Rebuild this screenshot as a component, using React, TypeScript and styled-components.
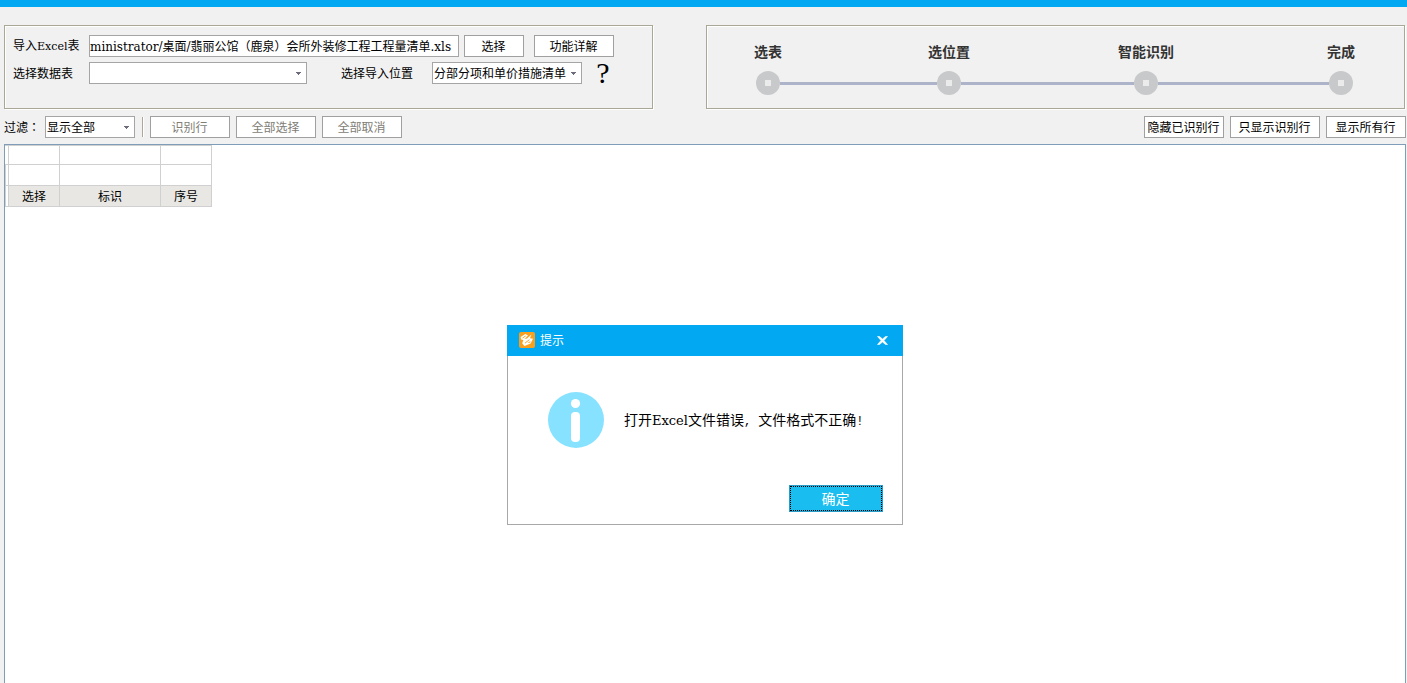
import React, { useEffect, useRef } from 'react';
import styled, { createGlobalStyle } from 'styled-components';

const cjk = '"Noto Sans CJK SC", sans-serif';

const GlobalStyle = createGlobalStyle`
  * { box-sizing: border-box; }
  body {
    margin: 0;
    background: #f1f1f1;
    color: #000;
    font: 12px/16px ${cjk};
  }
  button, input, select { font: inherit; color: inherit; }
`;

const Page = styled.div`
  display: flex;
  flex-direction: column;
  min-height: 100vh;
`;

const TopStrip = styled.div`
  height: 7px;
  background: #02a8f2;
`;

const Panels = styled.div`
  display: flex;
  gap: 53px;
  padding: 18px 2px 0 4px;
`;

const Panel = styled.section`
  height: 84px;
  border: 1px solid #aaa797;
  box-shadow: 1px 1px 0 #fff, inset 1px 1px 0 #fff;
`;

const ImportPanel = styled(Panel)`
  display: flex;
  flex: none;
  flex-direction: column;
  gap: 5px;
  padding: 9px 38px 0 8px;
`;

const StepsPanel = styled(Panel)`
  flex: 1;
  padding: 16px 51px 0 49px;
`;

const FormRow = styled.div`
  display: flex;
  align-items: center;
  height: 22px;
`;

const Label = styled.label<{ $width: number; $indent?: number }>`
  flex: none;
  width: ${(p) => p.$width}px;
  margin-left: ${(p) => p.$indent ?? 0}px;
  white-space: nowrap;
`;

const Latin = styled.span`
  font-family: "DejaVu Serif", serif;
  font-size: 11px;
`;

const PathInput = styled.input`
  width: 370px;
  height: 22px;
  margin-right: 5px;
  padding: 0 3px 2px 0;
  border: 1px solid #a5a5a5;
  background: #fff;
  font-family: "DejaVu Serif", ${cjk};
  outline: none;
`;

const Button = styled.button<{ $width: number }>`
  flex: none;
  width: ${(p) => p.$width}px;
  height: 22px;
  padding: 0 1px 1px 0;
  border: 1px solid #a0a0a0;
  background: #fff;
  line-height: 16px;
  white-space: nowrap;
  &:disabled { color: #807d75; }
`;

const Detail = styled(Button)`
  margin-left: 10px;
`;

const SelectBox = styled.div<{ $width: number }>`
  display: grid;
  flex: none;
  align-items: center;
  width: ${(p) => p.$width}px;
  height: 22px;
  border: 1px solid #a5a5a5;
  background: #fff;
  & > * { grid-area: 1 / 1; }
  & > svg { justify-self: end; margin-right: 5px; pointer-events: none; }
`;

const Select = styled.select`
  width: 100%;
  height: 20px;
  padding: 0 14px 0 1px;
  border: 0;
  background: transparent;
  appearance: none;
  outline: none;
`;

const Help = styled.button`
  width: 16px;
  height: 22px;
  margin-left: 13px;
  padding: 0;
  border: 0;
  background: none;
  font: 30px/22px "Liberation Serif", serif;
`;

const Steps = styled.ol`
  display: flex;
  align-items: flex-end;
  margin: 0;
  padding: 0;
  list-style: none;
`;

const Step = styled.li`
  display: flex;
  flex: none;
  flex-direction: column;
  align-items: center;
  gap: 11px;
  width: 24px;
  color: #333;
  font-size: 14px;
  font-weight: bold;
  line-height: 18px;
  white-space: nowrap;
`;

const Dot = styled.span`
  display: grid;
  place-items: center;
  width: 24px;
  height: 24px;
  border-radius: 50%;
  background: #c8c9cb;
  &::after {
    content: "";
    width: 6px;
    height: 6px;
    background: #ebebeb;
  }
`;

const Line = styled.li<{ $grow: number }>`
  flex: ${(p) => p.$grow} 1 0;
  height: 3px;
  margin-bottom: 10px;
  background: #adb4ca;
`;

const Toolbar = styled.div`
  display: flex;
  align-items: center;
  gap: 6px;
  padding: 7px 1px 6px 4px;
`;

const FilterLabel = styled.label`
  width: 35px;
  white-space: nowrap;
`;

const Colon = styled.span`
  font-family: "Noto Sans CJK TC", sans-serif;
`;

const Divider = styled.span`
  width: 2px;
  height: 20px;
  margin-left: 1px;
  border-left: 1px solid #aca899;
  background: #fff;
`;

const Spacer = styled.span`
  flex: 1;
`;

const Workspace = styled.main`
  position: relative;
  flex: 1;
  min-height: 400px;
  margin: 0 1px 0 4px;
  border: 1px solid #7f9db9;
  border-bottom: 0;
  background: #fff;
`;

const Grid = styled.table`
  width: 207px;
  border-top: 1px solid #d0d0d0;
  border-spacing: 0;
  table-layout: fixed;
`;

const Cell = styled.td`
  height: 21px;
  padding: 0;
  border: solid #d0d0d0;
  border-width: 0 1px 1px 0;
`;

const ShortCell = styled(Cell)`
  height: 19px;
`;

const Gutter = styled(Cell)`
  border-left-width: 1px;
`;

const HeadCell = styled(Cell)`
  background: #e8e7e3;
  font-weight: normal;
  text-align: center;
`;

const Dialog = styled.div`
  position: absolute;
  top: 180px;
  left: 50%;
  width: 396px;
  transform: translateX(-50%);
  background: #fff;
`;

const DialogHeader = styled.header`
  display: flex;
  align-items: center;
  gap: 5px;
  height: 31px;
  padding: 0 14px 1px 12px;
  background: #02a8f2;
  color: #fff;
`;

const DialogTitle = styled.h2`
  flex: 1;
  margin: 0;
  font-size: 12px;
  font-weight: normal;
  line-height: 16px;
`;

const Close = styled.button`
  display: flex;
  padding: 0;
  border: 0;
  background: none;
`;

const DialogBody = styled.div`
  border: 1px solid #a8a8a8;
  border-top: 0;
  padding: 36px 19px 12px 40px;
`;

const Message = styled.div`
  display: flex;
  align-items: center;
  gap: 20px;
  font-size: 14px;
  line-height: 20px;
  white-space: nowrap;
`;

const MessageText = styled.p`
  margin: 0;
`;

const MessageLatin = styled(Latin)`
  font-size: 13px;
`;

const Punctuation = styled.span`
  font-family: "Liberation Mono", monospace;
  font-size: 12px;
`;

const Actions = styled.div`
  display: flex;
  justify-content: flex-end;
  margin-top: 37px;
`;

const Confirm = styled.button`
  width: 94px;
  height: 27px;
  padding: 0 1px 2px 0;
  border: 1px solid #2a9cc8;
  outline: 1px dotted #000;
  outline-offset: -2px;
  background: #1abdf0;
  color: #fff;
  font-size: 14px;
  line-height: 20px;
`;

const Arrow = () => (
  <svg width="5" height="3" viewBox="0 0 5 3" aria-hidden="true" shapeRendering="crispEdges">
    <path d="M0 0h5v1H4v1H3v1H2V2H1V1H0z" fill="#6c6c7c" />
  </svg>
);

const AppLogo = () => (
  <svg width="16" height="16" viewBox="0 0 16 16" aria-hidden="true">
    <rect width="16" height="16" rx="2" fill="#f9a11f" />
    <path d="M1.6 5 6.4 2 9 3.4 5.6 7 8 6.6 12.4 2.6 11 6.2 14 6.8 11.6 11.6 5.4 14 3.2 11.2 4.4 8 2.2 7.4z" fill="#fff" />
    <path d="M3.6 6 6.6 4M6 11.2 10.4 7.6M9.4 10.6l2-.8" fill="none" stroke="#f9a11f" strokeWidth="1" />
  </svg>
);

const CloseIcon = () => (
  <svg width="13" height="9" viewBox="0 0 13 9" aria-hidden="true">
    <path d="M1.5 0.5h2L6.5 3l3-2.5h2L8 4.5l3.5 4h-2L6.5 6l-3 2.5h-2L5 4.5z" fill="#fff" stroke="#fff" strokeWidth=".6" />
  </svg>
);

const InfoIcon = () => (
  <svg width="56" height="56" viewBox="0 0 56 56" aria-hidden="true">
    <circle cx="28" cy="28" r="28" fill="#86e2ff" />
    <circle cx="27.5" cy="11.5" r="4.6" fill="#fff" />
    <rect x="23" y="20" width="9" height="30" rx="4" fill="#fff" />
  </svg>
);

export default function App() {
  const path = useRef<HTMLInputElement>(null);

  // keep the file name, at the end of the path, in view
  useEffect(() => {
    if (path.current) path.current.scrollLeft = path.current.scrollWidth;
  }, []);

  return (
    <Page>
      <GlobalStyle />
      <TopStrip />
      <Panels>
        <ImportPanel>
          <FormRow>
            <Label htmlFor="file" $width={76}>导入<Latin>Excel</Latin>表</Label>
            <PathInput
              id="file"
              ref={path}
              readOnly
              value="ministrator/桌面/翡丽公馆（鹿泉）会所外装修工程工程量清单.xls"
            />
            <Button $width={60}>选择</Button>
            <Detail $width={80}>功能详解</Detail>
          </FormRow>
          <FormRow>
            <Label htmlFor="sheet" $width={76}>选择数据表</Label>
            <SelectBox $width={218}>
              <Select id="sheet"><option></option></Select>
              <Arrow />
            </SelectBox>
            <Label htmlFor="target" $width={91} $indent={34}>选择导入位置</Label>
            <SelectBox $width={150}>
              <Select id="target"><option>分部分项和单价措施清单</option></Select>
              <Arrow />
            </SelectBox>
            <Help>?</Help>
          </FormRow>
        </ImportPanel>
        <StepsPanel>
          <Steps>
            <Step>选表<Dot /></Step>
            <Line $grow={157} aria-hidden="true" />
            <Step>选位置<Dot /></Step>
            <Line $grow={173} aria-hidden="true" />
            <Step>智能识别<Dot /></Step>
            <Line $grow={171} aria-hidden="true" />
            <Step>完成<Dot /></Step>
          </Steps>
        </StepsPanel>
      </Panels>
      <Toolbar>
        <FilterLabel htmlFor="filter">过滤<Colon>：</Colon></FilterLabel>
        <SelectBox $width={90}>
          <Select id="filter"><option>显示全部</option></Select>
          <Arrow />
        </SelectBox>
        <Divider />
        <Button $width={80} disabled>识别行</Button>
        <Button $width={80} disabled>全部选择</Button>
        <Button $width={80} disabled>全部取消</Button>
        <Spacer />
        <Button $width={80}>隐藏已识别行</Button>
        <Button $width={90}>只显示识别行</Button>
        <Button $width={80}>显示所有行</Button>
      </Toolbar>
      <Workspace>
        <Grid>
          <colgroup>
            <col width="4" />
            <col width="51" />
            <col width="101" />
            <col width="51" />
          </colgroup>
          <thead>
            <tr><ShortCell /><ShortCell /><ShortCell /><ShortCell /></tr>
            <tr><Gutter /><Cell /><Cell /><Cell /></tr>
            <tr>
              <Gutter />
              <HeadCell as="th" scope="col">选择</HeadCell>
              <HeadCell as="th" scope="col">标识</HeadCell>
              <HeadCell as="th" scope="col">序号</HeadCell>
            </tr>
          </thead>
        </Grid>
        <Dialog role="alertdialog" aria-labelledby="dialog-title" aria-describedby="dialog-text">
          <DialogHeader>
            <AppLogo />
            <DialogTitle id="dialog-title">提示</DialogTitle>
            <Close aria-label="关闭"><CloseIcon /></Close>
          </DialogHeader>
          <DialogBody>
            <Message>
              <InfoIcon />
              <MessageText id="dialog-text">
                打开<MessageLatin>Excel</MessageLatin>文件错误<Punctuation>, </Punctuation>文件格式不正确<Punctuation>!</Punctuation>
              </MessageText>
            </Message>
            <Actions>
              <Confirm>确定</Confirm>
            </Actions>
          </DialogBody>
        </Dialog>
      </Workspace>
    </Page>
  );
}
